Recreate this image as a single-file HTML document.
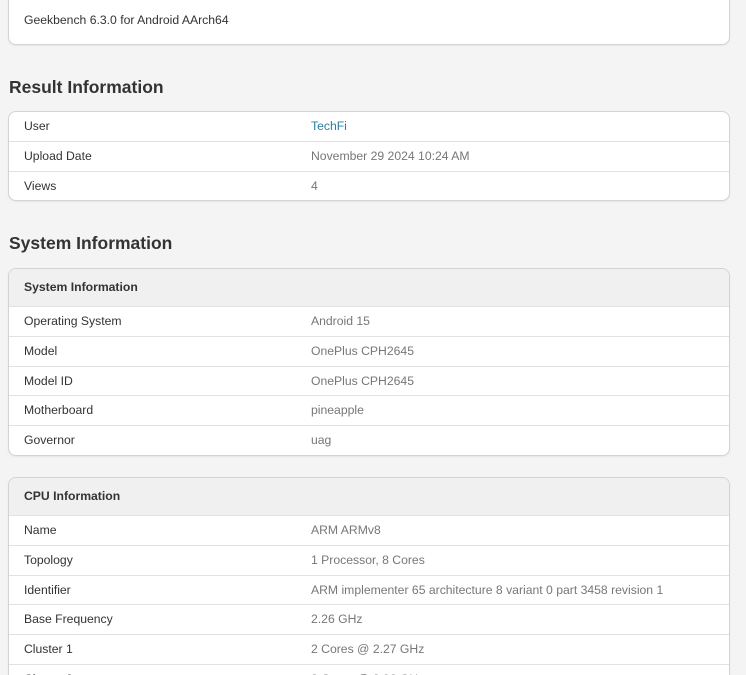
<!DOCTYPE html>
<html><head><meta charset="utf-8"><style>
html,body{margin:0;width:746px;height:675px;overflow:hidden}
body{background:#f4f4f4;font-family:"Liberation Sans",Arial,sans-serif;font-size:12.2px;color:#333;position:relative}
.card{position:absolute;left:8px;width:720px;background:#fff;border:1px solid #d3d3d3;border-radius:8px;overflow:hidden;box-shadow:0 1px 2px rgba(0,0,0,.06)}
.row{height:28.8px;border-top:1px solid #e2e2e2;position:relative;line-height:28.8px}
.row:first-child{border-top:none}
.row span{position:absolute;left:15px}
.row b{position:absolute;left:302px;font-weight:normal;color:#777}
.hd{height:37px;line-height:37px;background:#f0f0f0;font-weight:bold;padding-left:15px;color:#333}
h2{position:absolute;left:9px;margin:0;font-size:17.5px;font-weight:bold;color:#333}
</style></head><body>
<div class="card" style="top:-10px;height:53px"><div style="position:absolute;left:15px;top:22px">Geekbench 6.3.0 for Android AArch64</div></div>
<h2 style="top:77px">Result Information</h2>
<div class="card" style="top:111px">
<div class="row"><span>User</span><b style="color:#2a7fa8">TechFi</b></div>
<div class="row"><span>Upload Date</span><b>November 29 2024 10:24 AM</b></div>
<div class="row"><span>Views</span><b>4</b></div>
</div>
<h2 style="top:233px">System Information</h2>
<div class="card" style="top:268px">
<div class="hd">System Information</div>
<div class="row"><span>Operating System</span><b>Android 15</b></div>
<div class="row"><span>Model</span><b>OnePlus CPH2645</b></div>
<div class="row"><span>Model ID</span><b>OnePlus CPH2645</b></div>
<div class="row"><span>Motherboard</span><b>pineapple</b></div>
<div class="row"><span>Governor</span><b>uag</b></div>
</div>
<div class="card" style="top:477px;height:220px">
<div class="hd">CPU Information</div>
<div class="row"><span>Name</span><b>ARM ARMv8</b></div>
<div class="row"><span>Topology</span><b>1 Processor, 8 Cores</b></div>
<div class="row"><span>Identifier</span><b>ARM implementer 65 architecture 8 variant 0 part 3458 revision 1</b></div>
<div class="row"><span>Base Frequency</span><b>2.26 GHz</b></div>
<div class="row"><span>Cluster 1</span><b>2 Cores @ 2.27 GHz</b></div>
<div class="row"><span>Cluster 2</span><b>3 Cores @ 2.96 GHz</b></div>
</div>
</body></html>
